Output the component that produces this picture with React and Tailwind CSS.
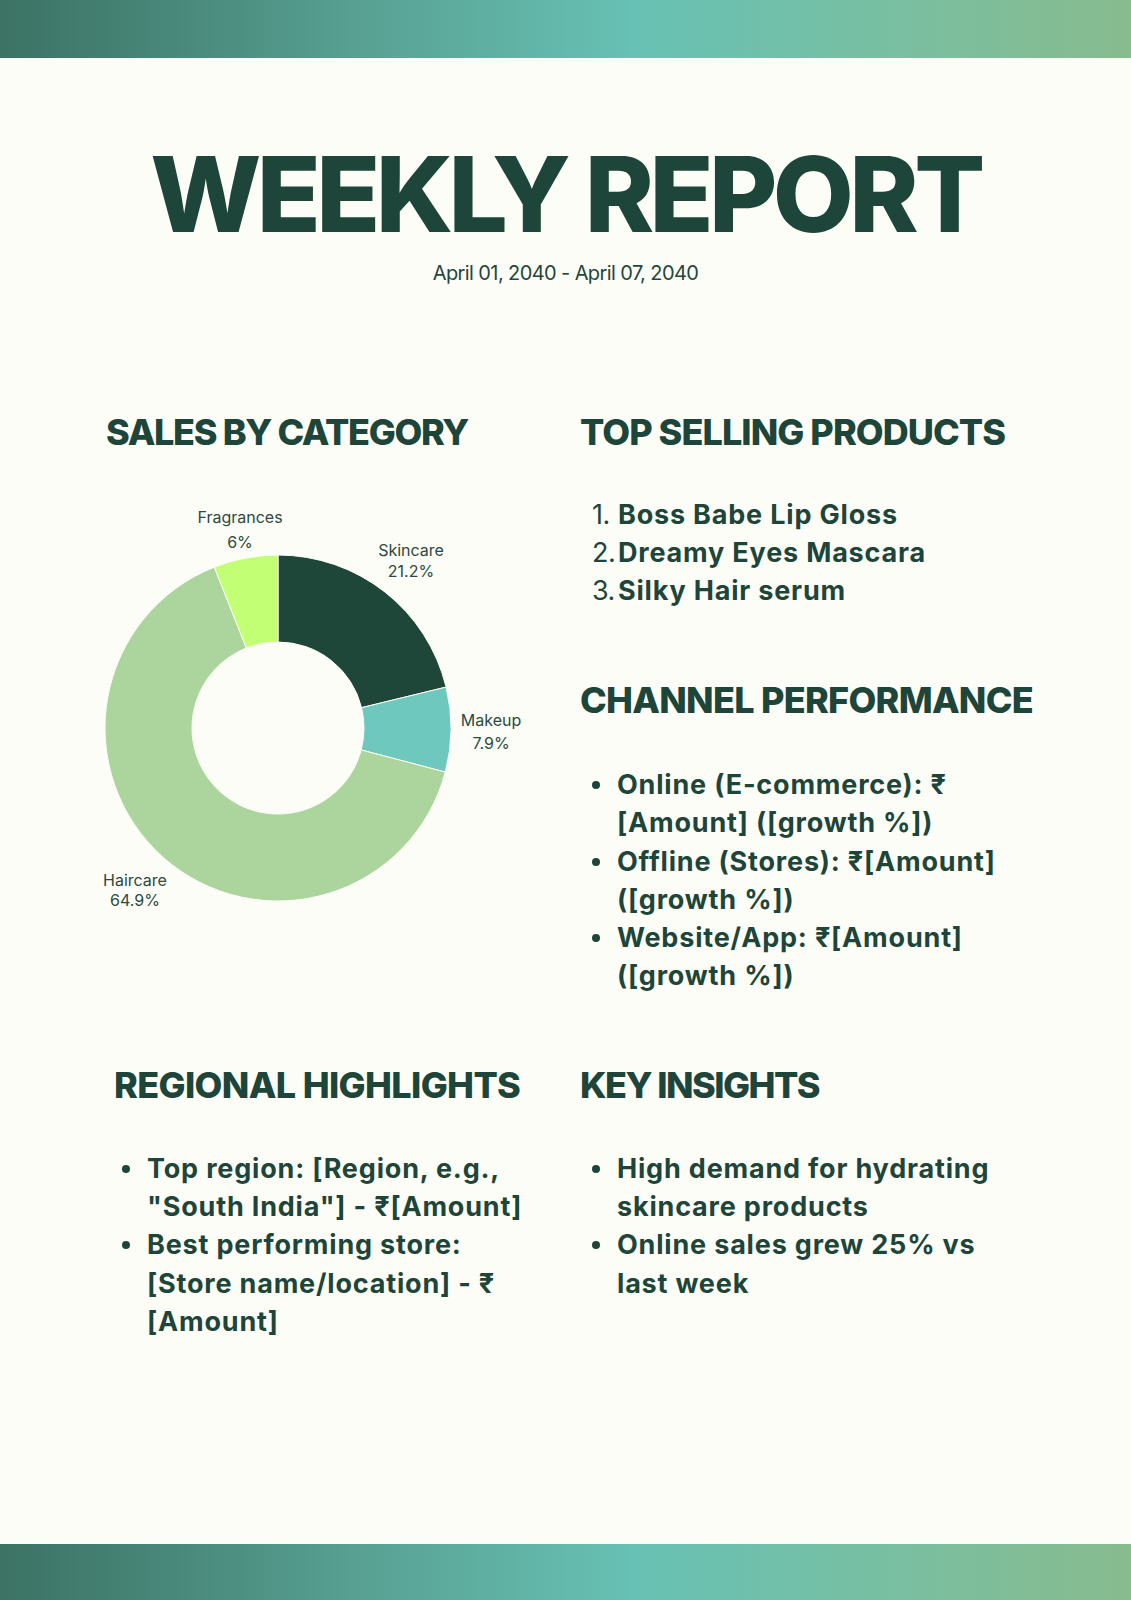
import React from "react";

function Donut() {
  const cx = 188, cy = 238, R = 173, r = 86;
  const pt = (a, rad) => {
    const t = (a * Math.PI) / 180;
    return [cx + rad * Math.sin(t), cy - rad * Math.cos(t)];
  };
  const arc = (a0, a1) => {
    const large = a1 - a0 > 180 ? 1 : 0;
    const [x0, y0] = pt(a0, R);
    const [x1, y1] = pt(a1, R);
    const [x2, y2] = pt(a1, r);
    const [x3, y3] = pt(a0, r);
    return `M${x0} ${y0} A${R} ${R} 0 ${large} 1 ${x1} ${y1} L${x2} ${y2} A${r} ${r} 0 ${large} 0 ${x3} ${y3} Z`;
  };
  const data = [
    { v: 21.2, c: "#1e4639" },
    { v: 7.9, c: "#6ec8bd" },
    { v: 64.9, c: "#acd59e" },
    { v: 6, c: "#c3ff74" },
  ];
  let acc = 0;
  const slices = data.map((d, i) => {
    const a0 = (acc / 100) * 360;
    acc += d.v;
    const a1 = (acc / 100) * 360;
    return <path key={i} d={arc(a0, a1)} fill={d.c} stroke="#fdfdf7" strokeWidth="1" />;
  });
  const lbl = { fontFamily: "Inter, 'Liberation Sans', sans-serif", fontSize: 16, fill: "#2b4a40" };
  return (
    <svg width="480" height="430" viewBox="0 0 480 430" className="block overflow-visible">
      {slices}
      <text x="150" y="33" textAnchor="middle" style={lbl}>Fragrances</text>
      <text x="150" y="58" textAnchor="middle" style={lbl}>6%</text>
      <text x="321" y="66" textAnchor="middle" style={lbl}>Skincare</text>
      <text x="321" y="87" textAnchor="middle" style={lbl}>21.2%</text>
      <text x="401" y="236" textAnchor="middle" style={lbl}>Makeup</text>
      <text x="401" y="259" textAnchor="middle" style={lbl}>7.9%</text>
      <text x="45" y="396" textAnchor="middle" style={lbl}>Haircare</text>
      <text x="45" y="416" textAnchor="middle" style={lbl}>64.9%</text>
    </svg>
  );
}

function Heading({ children, className = "" }) {
  return (
    <h2 className={`text-[36px] leading-[40px] font-extrabold text-[#1d4539] whitespace-nowrap ${className}`}>
      {children}
    </h2>
  );
}

function Bullet({ children }) {
  return (
    <li className="flex">
      <span className="w-[25px] shrink-0 flex items-center h-[38px]">
        <span className="block w-[8px] h-[8px] rounded-full bg-[#1d4539]" />
      </span>
      <span>{children}</span>
    </li>
  );
}

const listCls = "text-[27px] leading-[38.3px] font-bold tracking-[0.03em]";

export default function App() {
  return (
    <div className="w-full min-h-[1600px] bg-[#fdfdf7] flex flex-col font-['Inter','Liberation_Sans',sans-serif] text-[#1d4539]">
      <div className="h-[58px] shrink-0 bg-[linear-gradient(90deg,#3b7264_0%,#5aa597_35%,#67c1b4_56%,#78bfa2_78%,#88bb8e_100%)]" />

      <main className="flex-1 flex flex-col">
        <h1 className="pt-[83px] text-center text-[105px] leading-[105px] font-extrabold tracking-[-0.044em] whitespace-nowrap">
          WEEKLY REPORT
        </h1>
        <p className="mt-[15px] text-center text-[20px] leading-[24px] tracking-[-0.03em] text-[#24463b]">
          April 01, 2040 - April 07, 2040
        </p>

        <section className="mt-[127px] grid grid-cols-[474px_1fr] pl-[106px] pr-[30px]">
          <div className="flex flex-col">
            <Heading className="tracking-[-0.037em]">SALES BY CATEGORY</Heading>
            <div className="mt-[38px] -ml-[16px]">
              <Donut />
            </div>
          </div>
          <div className="flex flex-col">
            <Heading className="tracking-[-0.026em]">TOP SELLING PRODUCTS</Heading>
            <ol className="mt-[44px] pl-[12px] text-[27px] leading-[38px]">
              {["Boss Babe Lip Gloss", "Dreamy Eyes Mascara", "Silky Hair serum"].map((t, i) => (
                <li key={i} className="flex">
                  <span className="w-[26px] shrink-0 font-normal tracking-[-0.02em]">{i + 1}.</span>
                  <span className="font-bold tracking-[0.03em]">{t}</span>
                </li>
              ))}
            </ol>

            <Heading className="mt-[70px] tracking-[-0.02em]">CHANNEL PERFORMANCE</Heading>
            <ul className={`mt-[46px] pl-[12px] ${listCls}`}>
              <Bullet>
                Online (E-commerce): ₹<br />[Amount] ([growth %])
              </Bullet>
              <Bullet>
                Offline (Stores): ₹[Amount]<br />([growth %])
              </Bullet>
              <Bullet>
                Website/App: ₹[Amount]<br />([growth %])
              </Bullet>
            </ul>
          </div>
        </section>

        <section className="mt-[69px] grid grid-cols-[474px_1fr] pl-[106px] pr-[30px]">
          <div className="flex flex-col pl-[8px]">
            <Heading className="tracking-[-0.018em]">REGIONAL HIGHLIGHTS</Heading>
            <ul className={`mt-[45px] pl-[8px] ${listCls}`}>
              <Bullet>
                Top region: [Region, e.g.,<br />"South India"] - ₹[Amount]
              </Bullet>
              <Bullet>
                Best performing store:<br />[Store name/location] - ₹<br />[Amount]
              </Bullet>
            </ul>
          </div>
          <div className="flex flex-col">
            <Heading className="tracking-[-0.043em]">KEY INSIGHTS</Heading>
            <ul className={`mt-[45px] pl-[12px] ${listCls}`}>
              <Bullet>
                High demand for hydrating<br />skincare products
              </Bullet>
              <Bullet>
                Online sales grew 25% vs<br />last week
              </Bullet>
            </ul>
          </div>
        </section>
      </main>

      <div className="h-[56px] shrink-0 bg-[linear-gradient(90deg,#3b7264_0%,#5aa597_35%,#67c1b4_56%,#78bfa2_78%,#88bb8e_100%)]" />
    </div>
  );
}
